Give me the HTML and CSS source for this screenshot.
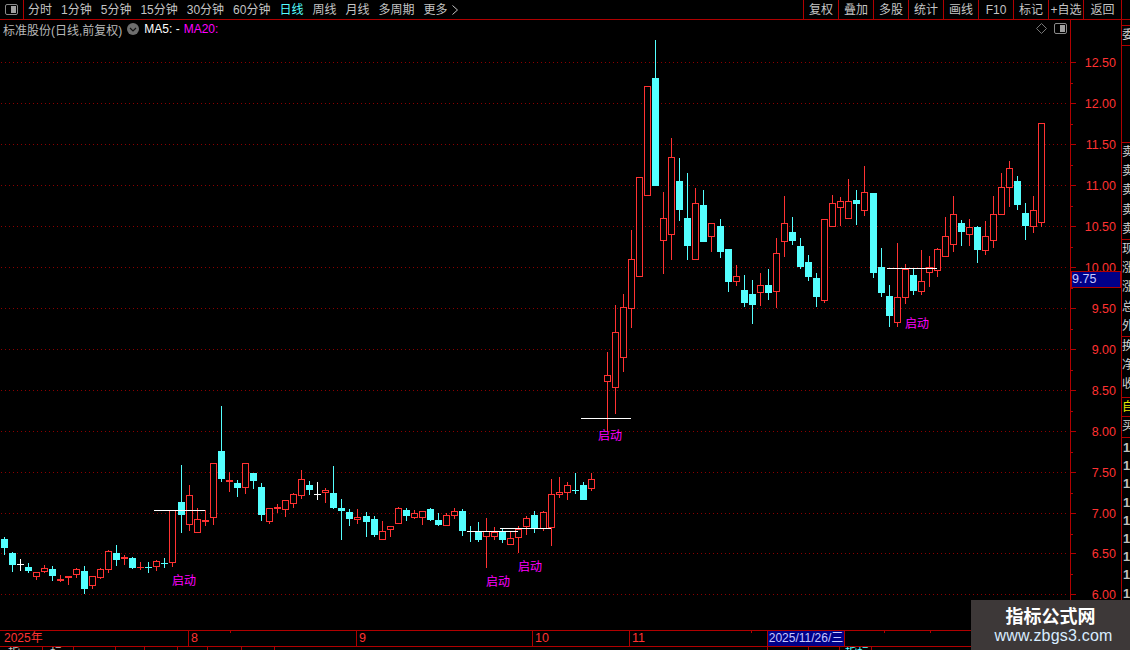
FILE: index.html
```html
<!DOCTYPE html>
<html lang="zh">
<head>
<meta charset="utf-8">
<title>标准股份 日线</title>
<link rel="stylesheet" href="styles.css">
</head>
<body>
<div class="app">
  <header class="topbar">
    <div class="toggle-cell"><span class="toggle-icon"><i></i></span></div>
    <nav class="periods">
      <span>分时</span><span>1分钟</span><span>5分钟</span><span>15分钟</span><span>30分钟</span><span>60分钟</span>
      <span class="active">日线</span><span>周线</span><span>月线</span><span>多周期</span>
      <span class="more">更多<svg viewBox="0 0 6 10" width="6" height="10"><path d="M.5.5l5 4.5-5 4.5" fill="none" stroke="#c4c4c4"/></svg></span>
    </nav>
    <nav class="tools">
      <span>复权</span><span>叠加</span><span>多股</span><span>统计</span><span>画线</span><span>F10</span><span>标记</span><span>+自选</span><span class="last">返回</span>
    </nav>
  </header>
  <main class="body">
    <section class="plot">
      <div class="legend">
        <span class="name">标准股份(日线,前复权)</span>
        <span class="chev"><svg viewBox="0 0 12 12" width="12" height="12"><circle cx="6" cy="6" r="6" fill="#6e6e6e"/><path d="M3 5l3 3 3-3" fill="none" stroke="#111" stroke-width="1.2"/></svg></span>
        <span class="ma5">MA5: -</span>
        <span class="ma20">MA20:</span>
      </div>
      <div class="plot-icons">
        <svg viewBox="0 0 11 11" width="11" height="11"><path d="M5.5.5l5 5-5 5-5-5z" fill="none" stroke="#777"/></svg>
        <span class="toggle-icon"><i></i></span>
      </div>
      <svg id="chart" class="chart" width="1070" height="610" viewBox="0 20 1070 610"></svg>
    </section>
    <section class="axis">
      <svg id="axis" width="51" height="610" viewBox="1070 20 51 610"></svg>
      <div class="cross-tag">9.75</div>
    </section>
    <aside class="side">
      <div class="cell c1"><span>委</span></div>
      <div class="cell c2"><span>卖</span><span>卖</span><span>卖</span><span>卖</span><span>卖</span></div>
      <div class="cell c3"><span>现</span><span>涨</span><span>涨</span><span>总</span><span>外</span></div>
      <div class="cell c4"><span>换</span><span>净</span><span>收</span></div>
      <div class="cell c5"><span>自</span></div>
      <div class="cell c6"><span>买</span></div>
      <div class="nums"><span>1</span><span>1</span><span>1</span><span>1</span><span>1</span><span>1</span><span>1</span><span>1</span><span>1</span></div>
    </aside>
  </main>
  <footer class="dates">
    <div class="date-row" id="dateRow">
      <span class="d d-year">2025年</span>
      <span class="d d-8">8</span>
      <span class="d d-9">9</span>
      <span class="d d-10">10</span>
      <span class="d d-11">11</span>
      <span class="d-cross">2025/11/26/三</span>
    </div>
    <div class="below" id="below"><span class="b1">指</span><span class="b2">标</span><span class="b3">指标</span></div>
  </footer>
  <div class="watermark">
    <strong>指标公式网</strong>
    <span>www.zbgs3.com</span>
  </div>
</div>
<script src="app.js"></script>
</body>
</html>
```

FILE: styles.css
```css
* { box-sizing: border-box; }
html, body { margin: 0; height: 100%; background: #000; overflow: hidden; }
body { font: 12px "Liberation Sans", "Noto Sans CJK SC", sans-serif; color: #c4c4c4; }
.app { position: relative; width: 1130px; height: 650px; display: flex; flex-direction: column; }

.topbar { height: 20px; flex: none; display: flex; border-bottom: 1px solid #b00000; line-height: 20px; }
.toggle-cell { width: 24px; border-right: 1px solid #b00000; display: flex; align-items: center; justify-content: center; }
.toggle-icon { width: 13px; height: 11px; border: 1px solid #8a8a8a; border-radius: 2px; display: flex; justify-content: flex-end; padding: 1px; }
.toggle-icon i { width: 5px; background: #a0a0a0; }
.periods { display: flex; margin-left: 4px; gap: 9px; }
.periods span { white-space: nowrap; }
.periods .active { color: #54ffff; }
.more { display: flex; align-items: center; gap: 4px; }
.tools { margin-left: auto; display: flex; margin-right: 8px; border-left: 1px solid #b00000; }
.tools span { width: 35px; text-align: center; border-right: 1px solid #b00000; white-space: nowrap; }
.tools .last { width: 38px; }

.body { flex: none; height: 610px; display: flex; }
.plot { position: relative; width: 1070px; flex: none; }
.chart { display: block; }
.chart text { font: 12px "Noto Sans CJK SC", sans-serif; fill: #ff00ff; text-anchor: middle; }
.legend { position: absolute; left: 3px; top: 1px; display: flex; align-items: center; gap: 5px; height: 16px; white-space: nowrap; z-index: 1; }
.name { color: #b8b8b8; }
.chev { display: flex; }
.ma5 { color: #fff; }
.ma20 { color: #ff00ff; margin-left: -1px; }
.plot-icons { position: absolute; right: 3px; top: 3px; display: flex; align-items: center; gap: 7px; z-index: 1; }

.axis { position: relative; width: 52px; flex: none; border-left: 1px solid #b00000; border-right: 1px solid #b00000; }
.axis svg { display: block; margin-left: -1px; }
.axis text { font: 12.5px "Liberation Sans", sans-serif; fill: #ff3232; text-anchor: end; }
.cross-tag { position: absolute; left: 0; right: 0; top: 251px; height: 17px; background: #000088; border: 1px solid #b00000; color: #c8c8ff; line-height: 15px; font-size: 12.5px; padding-left: 0; }

.side { flex: 1; overflow: hidden; display: flex; flex-direction: column; color: #d0d0d0; font-size: 12px; line-height: 19.2px; }
.cell { display: flex; flex-direction: column; overflow: hidden; border-bottom: 1px solid #b00000; flex: none; }
.c1 { margin-top: 5px; height: 21px; border-top: 1px solid #b00000; }
.c2 { margin-top: 96px; height: 98px; border-top: 1px solid #b00000; }
.c3 { height: 97px; }
.c4 { height: 61px; }
.c5 { height: 19px; color: #e8e800; }
.c6 { height: 21px; }
.nums { display: flex; flex-direction: column; font: 700 13px/18.2px "Liberation Sans", sans-serif; color: #c0c0c0; padding: 1px 0 0 1px; }

.dates { flex: none; height: 20px; border-top: 1px solid #b00000; color: #ff3232; overflow: hidden; }
.date-row { position: relative; height: 16px; border-bottom: 1px solid #b00000; line-height: 15px; font-size: 12.5px; }
.d { position: absolute; top: 0; height: 15px; padding-left: 2px; border-left: 1px solid #b00000; }
.d-year { left: 2px; border: 0; font-size: 12px; }
.d-8 { left: 188px; }
.d-9 { left: 356px; }
.d-10 { left: 532px; }
.d-11 { left: 629px; }
.d-cross { position: absolute; left: 767px; top: 0; width: 78px; height: 15px; background: #000088; border: 1px solid #b00000; border-width: 0 1px; color: #c8c8ff; font-size: 12px; line-height: 15px; text-align: center; white-space: nowrap; }
.tick-up { position: absolute; top: 0; width: 1px; height: 2px; background: #b00000; }
.below { position: relative; height: 3px; overflow: hidden; font-size: 12px; line-height: 12px; color: #c4c4c4; }
.below span { position: absolute; top: 0; }
.below .tick-down { top: 0; width: 1px; height: 3px; background: #b00000; }
.b1 { left: 8px; }
.b2 { left: 50px; }
.b3 { left: 845px; color: #54ffff; }

.watermark { position: absolute; left: 971px; top: 600px; width: 159px; height: 50px; background: #3d3838; display: flex; flex-direction: column; align-items: center; color: #fff; padding-top: 4px; }
.watermark strong { font: 700 18px/22px "Noto Sans CJK SC", sans-serif; }
.watermark span { font: 16px/20px "Liberation Sans", sans-serif; color: #d8ecff; letter-spacing: .2px; margin-left: 6px; }
```

FILE: app.js
```js
var C = 'c', R = 'r', W = 'w';
// colour, x, wick top, body top, body bottom, wick bottom
var candles = [
[C,4,537,539,548,555],[C,12,552,553,565,572],[W,20,559,564,565,571],[C,28,563,567,571,573],
[R,36,572,572,577,580],[R,44,565,568,572,573],[C,52,566,569,576,581],[R,60,575,579,581,582,1],
[R,68,576,576,578,585,1],[R,76,568,569,575,578],[C,84,566,571,589,594],[R,92,576,576,586,589],
[R,100,568,569,578,579],[R,108,550,551,570,573],[C,116,545,553,560,566],[R,124,555,557,559,565,1],
[C,132,557,558,568,569],[R,140,562,567,568,570,1],[C,148,562,567,568,573],[R,156,560,561,567,571],
[C,164,558,563,564,568],[R,172,510,510,563,567],[C,181,465,502,515,533],[R,189,485,495,525,531],
[R,197,508,519,533,533],[R,205,510,520,522,526,1],[R,213,463,463,518,525],[C,221,406,451,479,482],
[R,229,472,480,482,492,1],[C,237,480,483,488,497],[R,245,463,463,488,494],[C,253,473,473,481,489],
[C,261,483,487,515,521],[R,269,508,508,522,524],[R,277,504,507,509,513,1],[R,285,500,500,510,517],
[R,293,493,494,504,508],[R,301,470,479,496,499],[C,309,481,485,490,495],[W,317,482,494,495,500],
[R,325,488,490,493,503],[C,333,466,493,508,509],[C,341,499,508,511,540],[C,349,509,512,519,526],
[R,357,509,517,520,524],[C,366,512,516,522,537],[C,374,516,519,535,537],[R,382,521,531,540,540],
[R,390,526,526,530,537],[R,398,507,508,524,524],[C,406,508,510,516,521],[R,414,510,513,518,519],
[R,422,511,511,518,525],[C,430,508,509,520,521],[C,438,513,520,525,526],[R,446,513,515,526,526],
[R,454,508,511,516,519],[C,462,509,511,531,536],[C,470,526,531,532,542],[C,478,522,531,540,542],
[R,486,518,531,537,568],[R,494,527,532,537,540],[C,502,528,532,540,543],[R,510,531,538,545,545],
[R,518,526,529,538,553],[R,526,516,518,527,535],[C,534,511,515,528,533],[R,543,511,512,529,531],
[R,551,479,494,528,546],[R,559,477,492,495,498],[R,567,482,485,493,500],[C,575,473,490,491,494],
[C,583,482,485,500,500],[R,591,473,479,489,491],
[R,607,352,375,382,431],[R,615,305,332,388,414],[R,623,294,307,358,372],[R,631,230,259,309,328],
[R,639,177,177,277,277],[R,647,86,86,196,196],[C,655,40,78,186,186],[R,663,192,218,241,274],
[R,671,138,157,235,260],[C,679,158,181,210,221],[C,687,173,218,246,260],[R,695,188,203,260,260],
[C,703,190,205,242,242],[R,711,223,223,237,252],[C,720,219,226,252,258],[C,728,249,249,282,292],
[R,736,265,276,282,286],[C,744,275,290,303,307],[C,752,280,294,305,324],[R,760,273,285,293,306],
[C,768,269,285,293,300],[R,776,238,253,292,308],[R,784,196,223,242,257],[C,792,217,232,241,245],
[C,800,238,246,267,269],[C,808,255,262,277,281],[C,816,273,278,297,307],[R,824,219,219,301,303],
[R,832,195,203,227,227],[R,840,197,201,208,226],[R,848,179,201,219,219],[C,856,190,200,204,225],
[R,864,166,192,211,216],[C,873,193,193,273,278],[C,881,248,267,293,297],[C,889,285,296,316,327],
[R,897,243,297,323,327],[R,905,264,269,298,304],[C,913,269,275,291,295],[R,921,250,281,292,295],
[R,929,256,267,273,287],[R,937,248,249,271,277],[R,945,217,236,257,257],[R,953,196,214,245,252],
[C,961,220,223,232,246],[R,969,219,227,235,246],[C,977,226,227,250,263],[R,985,221,236,251,255],
[R,993,196,214,241,248],[R,1001,173,187,215,215],[R,1009,161,168,188,207],[C,1017,176,181,205,210],
[C,1025,203,213,226,240],[R,1033,196,210,227,233],[R,1041,123,123,223,227]
];
var COLORS = { c: '#54ffff', r: '#ff3232', w: '#ffffff' };
var whiteLines = [[581,631,418],[154,205,510],[467,518,531],[500,551,528],[887,937,268]];
var labels = [[184,585],[498,586],[530,571],[610,440],[917,328]];
var gridY = [62,103,144,185,226,267,308,349,390,431,472,513,553,594];
var prices = ['12.50','12.00','11.50','11.00','10.50','10.00','9.50','9.00','8.50','8.00','7.50','7.00','6.50','6.00'];
var ticksUp = [230,751,884,930];
var ticksDown = [42,73,115,144,177,207,241,274,767,808,839,871];

var NS = 'http://www.w3.org/2000/svg';
function el(parent, name, attrs, text) {
  var n = document.createElementNS(NS, name);
  for (var k in attrs) n.setAttribute(k, attrs[k]);
  if (text) n.textContent = text;
  parent.appendChild(n);
  return n;
}
function tick(parent, cls, x) {
  var s = document.createElement('span');
  s.className = cls;
  s.style.left = x + 'px';
  parent.appendChild(s);
}
var chart = document.getElementById('chart');
var axis = document.getElementById('axis');

gridY.forEach(function (y) {
  el(chart, 'line', { x1: 1, x2: 1066, y1: y + .5, y2: y + .5, stroke: '#8c0000', 'stroke-dasharray': '1 3', 'shape-rendering': 'crispEdges' });
});
candles.forEach(function (c) {
  var col = COLORS[c[0]], x = c[1], solid = c[6];
  el(chart, 'rect', { x: x, y: c[2], width: 1, height: c[5] - c[2], fill: col, 'shape-rendering': 'crispEdges' });
  var h = c[4] - c[3];
  if (c[0] === 'c' && h > 1 || solid) {
    el(chart, 'rect', { x: x - 3, y: c[3], width: 7, height: h, fill: col, 'shape-rendering': 'crispEdges' });
  } else if (h <= 1) {
    el(chart, 'rect', { x: x - 3, y: c[3], width: 7, height: 1, fill: col, 'shape-rendering': 'crispEdges' });
  } else {
    el(chart, 'rect', { x: x - 2.5, y: c[3] + .5, width: 6, height: h - 1, fill: '#000', stroke: col, 'shape-rendering': 'crispEdges' });
  }
});
whiteLines.forEach(function (l) {
  el(chart, 'rect', { x: l[0], y: l[2], width: l[1] - l[0], height: 1, fill: '#fff' });
});
labels.forEach(function (l) { el(chart, 'text', { x: l[0], y: l[1] }, '启动'); });

gridY.forEach(function (y, i) {
  el(axis, 'rect', { x: 1070, y: y, width: 6, height: 1, fill: '#b00000' });
  el(axis, 'rect', { x: 1070, y: y + 21, width: 3, height: 1, fill: '#b00000' });
  el(axis, 'text', { x: 1116, y: y + 5 }, prices[i]);
});
ticksUp.forEach(function (x) { tick(document.getElementById('dateRow'), 'tick-up', x); });
ticksDown.forEach(function (x) { tick(document.getElementById('below'), 'tick-down', x); });
```
